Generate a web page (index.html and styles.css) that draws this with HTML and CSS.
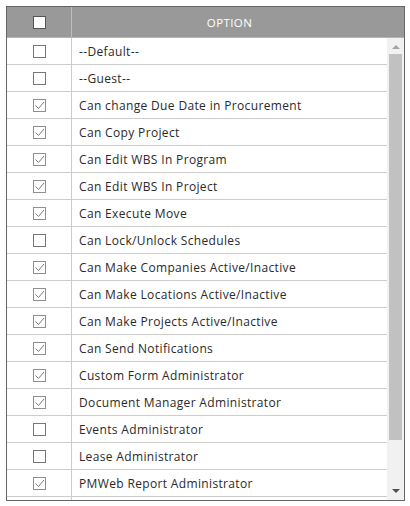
FILE: index.html
```html
<!DOCTYPE html>
<html>
<head>
<meta charset="utf-8">
<link rel="stylesheet" href="styles.css">
</head>
<body>
<div class="grid">
  <div class="head">
    <div class="hcell hcheck"><span class="hbox"></span></div>
    <div class="hcell hopt">OPTION</div>
  </div>
  <div class="body">
    <div class="rows" id="rows"></div>
    <div class="scroll">
      <div class="arrow up"></div>
      <div class="thumb"></div>
      <div class="arrow down"></div>
    </div>
  </div>
</div>
<script src="app.js"></script>
</body>
</html>
```
FILE: app.js
```js
var items = [
  ["--Default--", 0],
  ["--Guest--", 0],
  ["Can change Due Date in Procurement", 1],
  ["Can Copy Project", 1],
  ["Can Edit WBS In Program", 1],
  ["Can Edit WBS In Project", 1],
  ["Can Execute Move", 1],
  ["Can Lock/Unlock Schedules", 0],
  ["Can Make Companies Active/Inactive", 1],
  ["Can Make Locations Active/Inactive", 1],
  ["Can Make Projects Active/Inactive", 1],
  ["Can Send Notifications", 1],
  ["Custom Form Administrator", 1],
  ["Document Manager Administrator", 1],
  ["Events Administrator", 0],
  ["Lease Administrator", 0],
  ["PMWeb Report Administrator", 1],
  ["", 0]
];
var rows = document.getElementById("rows");
var check = '<svg class="tick" viewBox="0 0 13 13" width="13" height="13"><path d="M2.5 6.5 L5.5 9.5 L11 3" fill="none" stroke="#7a7a7a" stroke-width="1"/></svg>';
items.forEach(function (it) {
  var r = document.createElement("div");
  r.className = "row";
  r.innerHTML = '<div class="ccell"><span class="box' + (it[1] ? ' on' : '') + '">' + (it[1] ? check : '') + '</span></div><div class="tcell">' + it[0] + '</div>';
  rows.appendChild(r);
});
```
FILE: styles.css
```css
html, body { margin: 0; padding: 0; background: #fff; }
body { padding: 6px 0 0 6px; font-family: "Open Sans", Roboto, sans-serif; }
.grid {
  width: 397px;
  height: 493px;
  border: 1px solid #666;
  overflow: hidden;
  display: flex;
  flex-direction: column;
}
.head {
  display: flex;
  height: 30px;
  background: #999;
  border-bottom: 1px solid #b5b5b5;
  flex: none;
}
.hcell { display: flex; align-items: center; justify-content: center; }
.hcheck { width: 64px; border-right: 1px solid #bdbdbd; }
.hopt { flex: 1; color: #fff; font-size: 11.5px; letter-spacing: 0.4px; padding-right: 17px; font-family: "Open Sans", Roboto, sans-serif; }
.hbox { width: 11px; height: 11px; background: #fff; border: 1px solid #555; margin-top: 1px; }
.body { flex: 1; display: flex; overflow: hidden; }
.rows { flex: 1; overflow: hidden; }
.row { display: flex; height: 26px; border-bottom: 1px solid #ccc; }
.ccell { width: 64px; border-right: 1px solid #ccc; display: flex; align-items: center; justify-content: center; }
.tcell { flex: 1; display: flex; align-items: center; padding-left: 7px; font-size: 12px; color: #2a2a2a; letter-spacing: 0.35px; }
.box { width: 11px; height: 11px; border: 1px solid #777; background: #fff; position: relative; }
.box.on { border-color: #8f8f8f; }
.tick { position: absolute; left: -1px; top: -1px; }
.scroll { width: 17px; background: #f1f1f1; display: flex; flex-direction: column; align-items: center; flex: none; }
.arrow { width: 0; height: 0; border-left: 4px solid transparent; border-right: 4px solid transparent; margin: 7px 0 5px; }
.up { border-bottom: 4px solid #a3a3a3; }
.down { border-top: 4px solid #505050; margin: 5px 0 7px; }
.thumb { width: 13px; height: 386px; background: #c1c1c1; }
.scroll .down { margin-top: auto; }
```
